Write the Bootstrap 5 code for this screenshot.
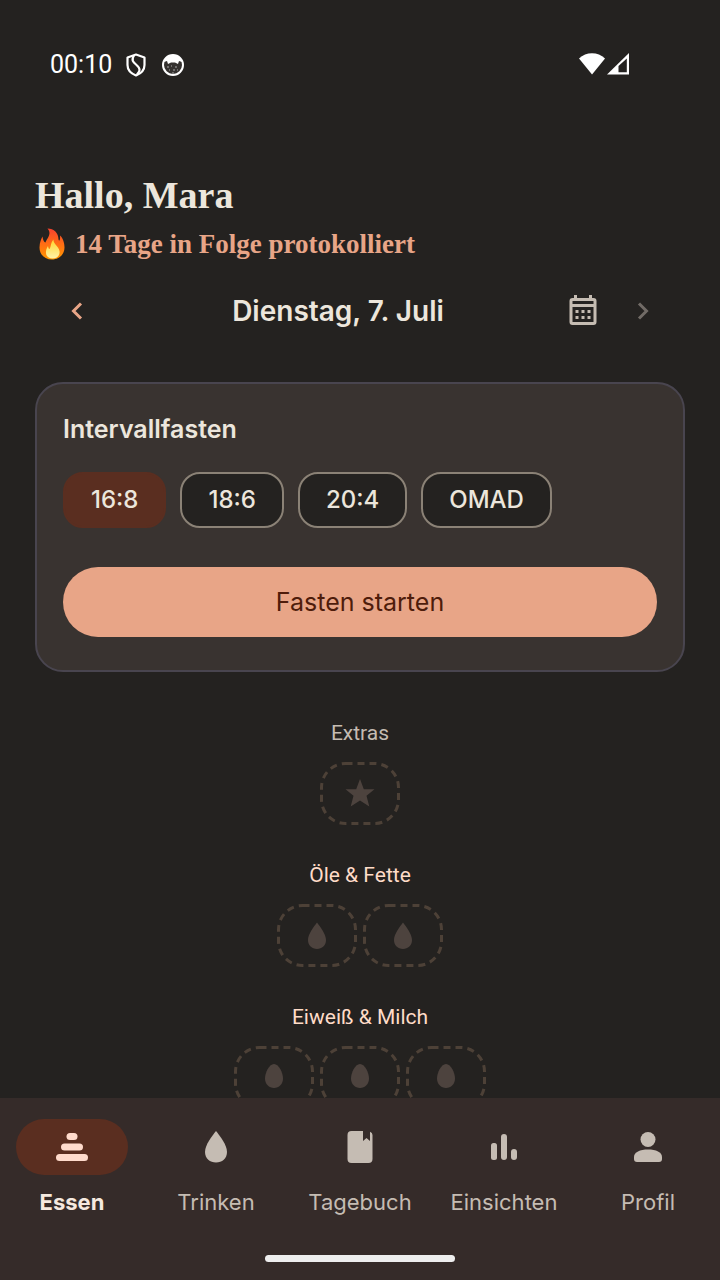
<!DOCTYPE html>
<html lang="de" data-bs-theme="dark">
<head>
<meta charset="utf-8">
<meta name="viewport" content="width=device-width, initial-scale=1">
<title>Ernährungstagebuch</title>
<link href="https://cdn.jsdelivr.net/npm/bootstrap@5.3.0/dist/css/bootstrap.min.css" rel="stylesheet">
<style>
  body { background: #242220; color: #ece6dc; font-family: Inter, sans-serif; }
  h1, h2, h3 { color: #ece6dc; }
  svg { display: block; flex: none; }
  .status { height: 132px; padding: 0 90px 0 50px; font: 25px/30px Roboto, sans-serif; color: #fff; }
  .status-icons { gap: 15px; margin-left: 14px; }
  .screen { padding: 0 35px; min-height: 0; }
  .hello { font: bold 38px/48px "Liberation Serif", serif; margin: 40px 0 0; }
  .streak { font: bold 27px/36px "Liberation Serif", serif; color: #e8a587; margin: 7px 0 0; gap: 6px; }
  .daybar { height: 84px; margin-top: 7px; }
  .daybar h2 { font-size: 28px; line-height: 36px; font-weight: 600; }
  .iconbtn { width: 84px; height: 84px; border: 0; padding: 0; }
  .iconbtn-slim { width: 44px; padding-left: 7px; }
  .fasting { background: #393330; border: 2px solid #49454f; border-radius: 28px; padding: 26px 26px 33px; margin-top: 29px; }
  .fasting h3 { font-size: 25px; line-height: 38px; font-weight: 600; margin-bottom: 24px; }
  .chips { gap: 14px; margin-bottom: 39px; }
  .chip { height: 56px; padding: 0 26px; border: 2px solid #8b8276; border-radius: 20px; background: #242220; color: #ece6dc; font-size: 24px; font-weight: 500; line-height: 32px; }
  .chip-on { background: #5a2e20; border-color: #5a2e20; }
  .start { height: 70px; background: #e8a587; color: #4e1c0b; font-size: 25px; line-height: 32px; }
  .groups { margin-top: 46px; gap: 35px; font: 21px/30px Roboto, sans-serif; color: #ffdcc8; }
  .group-muted { color: #c5bcb2; }
  .slots { gap: 6px; margin-top: 14px; }
  .slot { border: 0; padding: 0; background: none; }
  .tabs { background: #352b29; padding: 21px 0 18px; }
  .tab { color: #c5bcb3; font-size: 22px; line-height: 30px; text-decoration: none; gap: 12px; flex: 1 1 0; }
  .tab-icon { width: 112px; height: 56px; border-radius: 28px; }
  .tab-on { color: #f5e9df; font-weight: 700; }
  .tab-on .tab-icon { background: #5a2e20; color: #ffdbcc; }
  .homebar { width: 190px; height: 7px; border-radius: 4px; background: #eee; margin-top: 38px; }
</style>
</head>
<body>
<svg width="0" height="0" class="position-absolute" aria-hidden="true">
  <defs>
    <rect id="frame" x="1.5" y="1.5" width="77" height="60" rx="24" fill="none" stroke="#4d4137" stroke-width="3" stroke-dasharray="7 5"/>
    <path id="drop" d="M40 18.500C43 22.500 49 30 49 36C49 41.500 45 45 40 45S31 41.500 31 36C31 30 37 22.500 40 18.500Z" fill="#4d433e"/>
    <path id="egg" d="M40 18C45 18 49 27 49 32.500C49 38 45 42 40 42S31 38 31 32.500C31 27 35 18 40 18Z" fill="#4d433e"/>
  </defs>
</svg>
<div class="d-flex flex-column vh-100 overflow-hidden">
  <header class="status d-flex align-items-center">
    <span>00:10</span>
    <div class="status-icons d-flex">
      <svg width="20" height="24" viewBox="0 0 20 24" fill="none" stroke="#fff" stroke-width="2.200" stroke-linejoin="round" role="img" aria-label="Schutz"><path d="M10 1.500L18.500 4.500V12C18.500 17 15 20.500 10 22.500C5 20.500 1.500 17 1.500 12V4.500Z"/><path d="M8 2.500C5 7 7 9 10.500 12C15 16 14 18 11 21.500"/></svg>
      <svg width="24" height="24" viewBox="0 0 24 24" role="img" aria-label="Katze"><circle cx="12" cy="12" r="10" fill="#34312f" stroke="#fff" stroke-width="2"/><path d="M3 9C5 3 8 2 12 2S19 3 21 9L18 8L17 11L14 9.500H10L7 11L6 8Z" fill="#fff"/><path d="M6 14h2M10 13h1M14 14h2M8 17h1M12 17h2M16 17h1M11 20h2" stroke="#aaa"/></svg>
    </div>
    <svg class="ms-auto" width="51" height="26" viewBox="0 0 51 26" role="img" aria-label="WLAN und Mobilfunk"><path d="M0 6.500C7-.5 19-.5 26 6.500L13 22.500Z" fill="#fff"/><path d="M28 22.500L50 1V22.500Z" fill="#fff"/><path d="M39.500 14L47.800 6.500V20.300H39.500Z" fill="#242220"/></svg>
  </header>

  <main class="screen flex-grow-1 overflow-hidden">
    <h1 class="hello">Hallo, Mara</h1>
    <p class="streak d-flex align-items-center">
      <svg width="34" height="34" viewBox="0 0 34 34" role="img" aria-label="Feuer">
        <defs><linearGradient id="fire" x1="0" y1="0" x2="0" y2="1"><stop offset="0" stop-color="#f4422f"/><stop offset=".5" stop-color="#ff6d14"/><stop offset="1" stop-color="#ff9800"/></linearGradient><linearGradient id="glow" x1="0" y1="0" x2="0" y2="1"><stop offset="0" stop-color="#ffd52c"/><stop offset="1" stop-color="#fff3a8"/></linearGradient></defs>
        <path d="M12.500 1.500C19 1.500 23.500 6 23.500 12.500C24 15 25.500 13 25 8.500C28 11 29.500 16 29.500 20.500C29.500 27.500 24 32.500 17 32.500S4.500 28 4.500 20.500C4.500 15 6.500 11.500 7.500 9.500C8 13 9 15.500 10.500 15.500C11.500 12 17.500 7 12.500 1.500Z" fill="url(#fire)"/>
        <path d="M18.500 12.500C18 17 23.500 19 24.500 24C25.300 29 21.500 31.500 17.500 31.500S10.500 29 11 24.500C11.300 22 12 20.500 13 19C13.300 21 13.800 22 14.500 22C16 20.500 15.500 15.500 18.500 12.500Z" fill="url(#glow)"/>
      </svg>
      <span>14 Tage in Folge protokolliert</span>
    </p>

    <div class="daybar d-flex align-items-center">
      <button class="iconbtn btn d-flex align-items-center justify-content-center" aria-label="Vorheriger Tag"><svg width="14" height="20" viewBox="0 0 14 20" fill="none" stroke="#e8a587" stroke-width="3"><path d="M11 2.500L3.500 10L11 17.500"/></svg></button>
      <h2 class="flex-grow-1 text-center m-0 text-nowrap">Dienstag, 7. Juli</h2>
      <button class="iconbtn iconbtn-slim btn d-flex align-items-center justify-content-center" aria-label="Kalender"><svg width="28" height="32" viewBox="0 0 28 32" fill="none" stroke="#c5bcb2" stroke-width="3"><rect x="2" y="4.500" width="24" height="24" rx="1.500"/><path d="M2 10.500H26M6.500 0V4M21.500 0V4"/><path d="M6.500 16.500h3m3 0h3m3 0h3M6.500 22.500h3m3 0h3m3 0h3"/></svg></button>
      <button class="iconbtn btn d-flex align-items-center justify-content-center" aria-label="Nächster Tag"><svg width="14" height="20" viewBox="0 0 14 20" fill="none" stroke="#716b66" stroke-width="3"><path d="M3 2.500L10.500 10L3 17.500"/></svg></button>
    </div>

    <section class="fasting">
      <h3>Intervallfasten</h3>
      <div class="chips d-flex">
        <button class="chip chip-on" aria-pressed="true">16:8</button>
        <button class="chip">18:6</button>
        <button class="chip">20:4</button>
        <button class="chip">OMAD</button>
      </div>
      <button class="start btn rounded-pill border-0 w-100">Fasten starten</button>
    </section>

    <div class="groups d-flex flex-column text-center">
      <section>
        <div class="group-muted">Extras</div>
        <div class="slots d-flex justify-content-center">
          <button class="slot" aria-label="Extra"><svg width="80" height="63"><use href="#frame"/><path d="M40 17L43.800 27.300H54.500L46.500 33.800L49.300 44.500L40 38.500L30.700 44.500L33.500 33.800L25.500 27.300H36.200Z" fill="#4d433e"/></svg></button>
        </div>
      </section>
      <section>
        <div>Öle &amp; Fette</div>
        <div class="slots d-flex justify-content-center">
          <button class="slot" aria-label="Öl 1"><svg width="80" height="63"><use href="#frame"/><use href="#drop"/></svg></button>
          <button class="slot" aria-label="Öl 2"><svg width="80" height="63"><use href="#frame"/><use href="#drop"/></svg></button>
        </div>
      </section>
      <section>
        <div>Eiweiß &amp; Milch</div>
        <div class="slots d-flex justify-content-center">
          <button class="slot" aria-label="Eiweiß 1"><svg width="80" height="63"><use href="#frame"/><use href="#egg"/></svg></button>
          <button class="slot" aria-label="Eiweiß 2"><svg width="80" height="63"><use href="#frame"/><use href="#egg"/></svg></button>
          <button class="slot" aria-label="Eiweiß 3"><svg width="80" height="63"><use href="#frame"/><use href="#egg"/></svg></button>
        </div>
      </section>
    </div>
  </main>

  <footer class="tabs">
    <nav class="d-flex" aria-label="Hauptnavigation">
      <a href="#essen" class="tab tab-on d-flex flex-column align-items-center" aria-current="page"><span class="tab-icon d-flex align-items-center justify-content-center"><svg width="32" height="32" viewBox="0 0 32 32" fill="currentColor"><rect x="10.500" y="2" width="11" height="7" rx="3.500"/><rect x="5" y="12.500" width="22" height="7" rx="3.500"/><rect y="23" width="32" height="7" rx="3.500"/></svg></span>Essen</a>
      <a href="#trinken" class="tab d-flex flex-column align-items-center"><span class="tab-icon d-flex align-items-center justify-content-center"><svg width="32" height="32" viewBox="0 0 32 32" fill="currentColor"><path d="M16 0C20 5 27 14 27 21C27 27.500 22 31.500 16 31.500S5 27.500 5 21C5 14 12 5 16 0Z"/></svg></span>Trinken</a>
      <a href="#tagebuch" class="tab d-flex flex-column align-items-center"><span class="tab-icon d-flex align-items-center justify-content-center"><svg width="32" height="32" viewBox="0 0 32 32" fill="currentColor"><path d="M7.500 0H19V10L22.500 7L26 10V.800Q28.500 1.500 28.500 4V28Q28.500 32 24.500 32H7.500Q3.500 32 3.500 28V4Q3.500 0 7.500 0Z"/></svg></span>Tagebuch</a>
      <a href="#einsichten" class="tab d-flex flex-column align-items-center"><span class="tab-icon d-flex align-items-center justify-content-center"><svg width="32" height="32" viewBox="0 0 32 32" fill="currentColor"><rect x="3" y="12" width="6" height="17" rx="2.500"/><rect x="13" y="3" width="6" height="26" rx="3"/><rect x="23" y="18" width="6" height="11" rx="3"/></svg></span>Einsichten</a>
      <a href="#profil" class="tab d-flex flex-column align-items-center"><span class="tab-icon d-flex align-items-center justify-content-center"><svg width="32" height="32" viewBox="0 0 32 32" fill="currentColor"><circle cx="16" cy="8.500" r="7.500"/><path d="M2 26C2 21 8 18.500 16 18.500S30 21 30 26V28Q30 31 27 31H5Q2 31 2 28Z"/></svg></span>Profil</a>
    </nav>
    <div class="homebar mx-auto"></div>
  </footer>
</div>
<script src="https://cdn.jsdelivr.net/npm/bootstrap@5.3.0/dist/js/bootstrap.bundle.min.js"></script>
</body>
</html>
